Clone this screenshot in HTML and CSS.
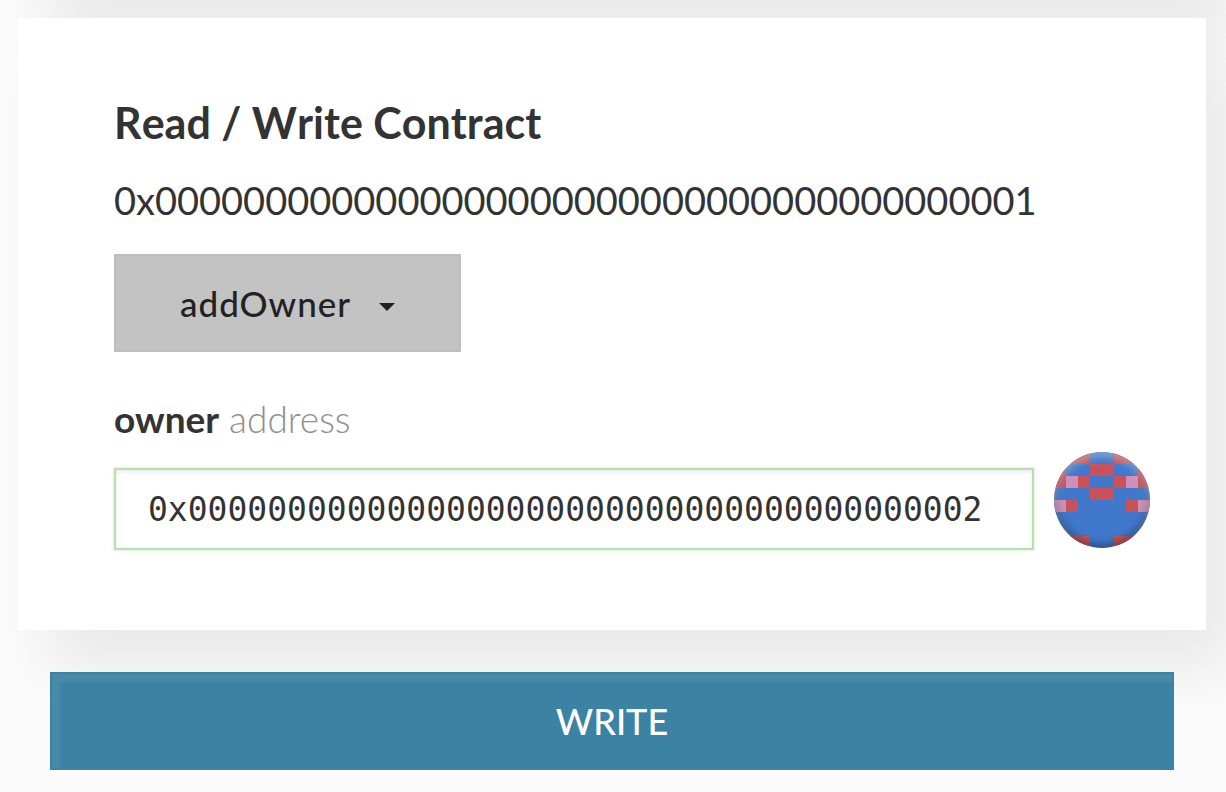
FILE: index.html
```html
<!DOCTYPE html>
<html lang="en">
<head>
<meta charset="utf-8">
<title>Read / Write Contract</title>
<link rel="stylesheet" href="styles.css">
</head>
<body>
<main class="page">
  <section class="card">
    <h1 class="title">Read / Write Contract</h1>
    <p class="contract">0x0000000000000000000000000000000000000001</p>
    <button class="dropdown" type="button">addOwner <span class="caret"></span></button>
    <label class="label" for="owner"><strong>owner</strong> <span class="type">address</span></label>
    <div class="field">
      <input class="input" id="owner" type="text" spellcheck="false" value="0x0000000000000000000000000000000000000002">
      <div class="identicon">
        <svg viewBox="0 0 8 8" width="96" height="96" shape-rendering="crispEdges" aria-hidden="true">
          <path fill="#4078cc" d="M0 0h8v8H0z"/>
          <path fill="#c9525a" d="M0 0h3v1H0zM5 0h3v1H5zM3 1h2v1H3zM0 2h1v1H0zM2 2h1v1H2zM5 2h1v1H5zM7 2h1v1H7zM0 1h1v1H0zM7 1h1v1H7zM3 3h2v1H3zM1 4h1v1H1zM6 4h1v1H6zM0 7h3v1H0zM5 7h3v1H5z"/>
          <path fill="#d08fb8" d="M1 2h1v1H1zM6 2h1v1H6zM0 4h1v1H0zM7 4h1v1H7z"/>
        </svg>
      </div>
    </div>
  </section>
  <button class="write" type="button">WRITE</button>
</main>
</body>
</html>
```
FILE: styles.css
```css
* { box-sizing: border-box; }
body {
  margin: 0;
  background: #fbfbfb;
  color: #333;
  font-family: Lato, sans-serif;
}
.page { padding: 18px 20px 22px 18px; overflow: hidden; }
.card {
  position: relative;
  padding: 80px 56px 80px 96px;
  background: #fff;
  box-shadow:
    30px 40px 60px rgba(0, 0, 0, .075),
    30px -592px 60px rgba(0, 0, 0, .075);
}
.title { margin: 0; font-size: 43px; line-height: 50px; font-weight: 700; font-kerning: none; }
.contract { margin: 26px 0 28px; font-size: 38px; line-height: 52px; }
.dropdown {
  display: flex;
  align-items: center;
  height: 98px;
  padding: 0 64px;
  border: 2px solid #bdbdbd;
  background: #c3c3c3;
  color: #222;
  font: 500 35px/48px Lato, sans-serif;
  letter-spacing: 1px;
}
.caret {
  margin: 8px 0 0 28px;
  border: 8px solid transparent;
  border-top-color: #222;
  border-bottom: 0;
}
.label { display: block; margin: 42px 0 8px; font-size: 37px; line-height: 50px; font-weight: 300; }
.label strong { font-weight: 700; }
.type { color: #8f8f8f; }
.field { display: flex; align-items: flex-end; gap: 20px; }
.input {
  flex: 1;
  min-width: 0;
  height: 82px;
  padding: 0 32px;
  border: 2px solid #b9dfb0;
  background: #fff;
  box-shadow: inset 0 2px 4px rgba(0, 0, 0, .08), 0 0 3px #c8e6c0;
  color: #333;
  font: 400 33px/48px "DejaVu Sans Mono", monospace;
}
.identicon { position: relative; width: 96px; height: 96px; margin-bottom: 2px; border-radius: 50%; overflow: hidden; }
.identicon svg { display: block; }
.identicon::after {
  content: "";
  position: absolute;
  inset: 0;
  border-radius: 50%;
  box-shadow: inset 0 4px 8px rgba(255, 255, 255, .45), inset 0 -2px 10px rgba(0, 0, 0, .55);
}
.write {
  display: block;
  width: calc(100% - 64px);
  height: 98px;
  margin: 42px auto 0;
  position: relative;
  border: 2px solid #3c82a4;
  background: #3c82a4;
  box-shadow: inset 8px 8px 4px rgba(255, 255, 255, .07);
  color: #fff;
  font: 500 36px/48px Lato, sans-serif;
  font-kerning: none;
}
```
